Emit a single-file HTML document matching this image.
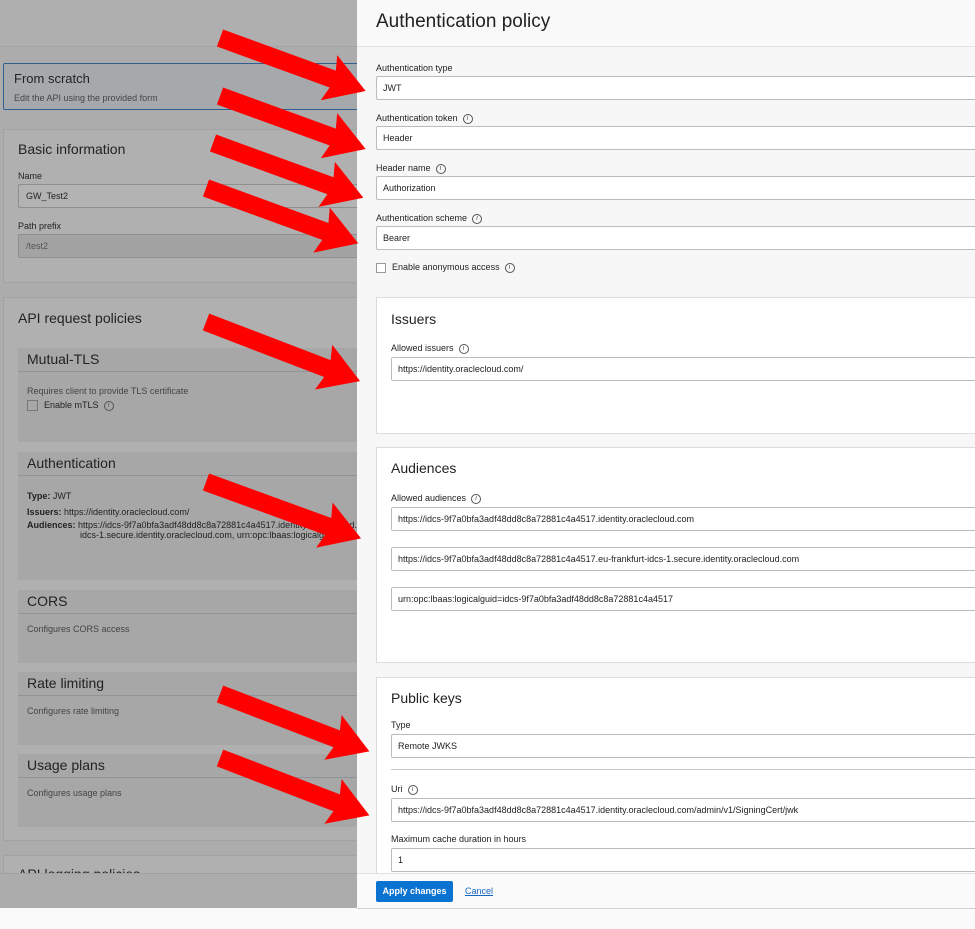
<!DOCTYPE html>
<html><head><meta charset="utf-8"><style>
*{margin:0;padding:0;box-sizing:border-box}
body{width:975px;height:929px;overflow:hidden;background:#fafafa;font-family:"Liberation Sans",Arial,sans-serif;position:relative}
.a{position:absolute}
#left{left:0;top:0;width:357px;height:908px;background:#acacac;overflow:hidden}
.card{position:absolute;left:3px;width:360px;background:#b0b0b0;border:1px solid #a2a2a2}
.sub{position:absolute;left:18px;width:345px;background:#a7a7a7}
.subh{height:24px;border-bottom:1px solid #8f9499;font-size:14px;color:#222;padding:3px 0 0 9px}
.t{font-size:10px;color:#444}
#right{left:357px;top:0;width:618px;height:908px;background:#f7f7f7}
.lbl{position:absolute;font-size:9px;color:#222}
.inp{position:absolute;left:19px;width:610px;height:24px;background:#fff;border:1px solid #b9bcc1;border-radius:2px;font-size:9px;color:#222;padding:6px 0 0 6px}
.sec{position:absolute;left:19px;width:610px;background:#fff;border:1px solid #dcdcdc}
.i{display:inline-block;width:10px;height:10px;border:1px solid #555;border-radius:50%;font-size:7px;line-height:8px;text-align:center;vertical-align:middle;margin-left:5px;color:#555;font-style:italic}
</style></head><body>
<div id="left" class="a">
 <div class="a" style="left:0;top:0;width:357px;height:47px;background:#afafaf;border-bottom:1px solid #a3a3a3"></div>
 <div class="a" style="left:3px;top:63px;width:360px;height:47px;background:#a6a9ac;border:1px solid #2f5f8f;border-radius:2px"></div>
 <div class="a" style="left:14px;top:71px;font-size:13px;color:#222">From scratch</div>
 <div class="a t" style="left:14px;top:93px;font-size:9px">Edit the API using the provided form</div>
 <div class="card" style="top:129px;height:154px"></div>
 <div class="a" style="left:18px;top:141px;font-size:14px;color:#222">Basic information</div>
 <div class="a" style="left:18px;top:171px;font-size:9px;color:#222">Name</div>
 <div class="a" style="left:18px;top:184px;width:345px;height:24px;background:#b3b3b3;border:1px solid #8f8f8f;border-radius:2px;font-size:9px;padding:6px 7px;color:#222">GW_Test2</div>
 <div class="a" style="left:18px;top:221px;font-size:9px;color:#222">Path prefix</div>
 <div class="a" style="left:18px;top:234px;width:345px;height:24px;background:#a3a3a3;border:1px solid #8f8f8f;border-radius:2px;font-size:9px;padding:6px 7px;color:#555">/test2</div>
 <div class="card" style="top:297px;height:544px"></div>
 <div class="a" style="left:18px;top:310px;font-size:14px;color:#222">API request policies</div>
 <div class="sub" style="top:348px;height:94px"><div class="subh">Mutual-TLS</div>
  <div class="t" style="margin:14px 0 0 9px;font-size:9px">Requires client to provide TLS certificate</div>
  <div style="margin:4px 0 0 9px;font-size:9px;color:#222"><span style="display:inline-block;width:11px;height:11px;border:1px solid #777;vertical-align:middle;margin-right:6px"></span>Enable mTLS<span class="i">i</span></div></div>
 <div class="sub" style="top:452px;height:128px"><div class="subh">Authentication</div>
  <div style="margin:12px 0 0 9px;font-size:9px;color:#222;line-height:16px"><b>Type:</b> JWT<br><b>Issuers:</b> https://identity.oraclecloud.com/</div>
  <div style="margin:0 0 0 9px;font-size:9px;color:#222;line-height:10px;white-space:nowrap"><b>Audiences:</b> https://idcs-9f7a0bfa3adf48dd8c8a72881c4a4517.identity.oraclecloud.com,<br><span style="padding-left:53px">idcs-1.secure.identity.oraclecloud.com, urn:opc:lbaas:logicalguid</span></div></div>
 <div class="sub" style="top:590px;height:73px"><div class="subh">CORS</div><div class="t" style="margin:10px 0 0 9px;font-size:9px">Configures CORS access</div></div>
 <div class="sub" style="top:672px;height:73px"><div class="subh">Rate limiting</div><div class="t" style="margin:10px 0 0 9px;font-size:9px">Configures rate limiting</div></div>
 <div class="sub" style="top:754px;height:73px"><div class="subh">Usage plans</div><div class="t" style="margin:10px 0 0 9px;font-size:9px">Configures usage plans</div></div>
 <div class="card" style="top:855px;height:80px"></div>
 <div class="a" style="left:18px;top:866px;font-size:14px;color:#222">API logging policies</div>
 <div class="a" style="left:0;top:873px;width:357px;height:35px;background:#acacac;border-top:1px solid #a0a0a0"></div>
</div>
<div id="right" class="a">
 <div class="a" style="left:0;top:0;width:618px;height:47px;border-bottom:1px solid #e2e2e2;background:#f9f9f9"></div>
 <div class="a" style="left:19px;top:11px;font-size:19px;color:#222">Authentication policy</div>
 <div class="lbl" style="left:19px;top:63px">Authentication type</div>
 <div class="inp" style="top:76px">JWT</div>
 <div class="lbl" style="left:19px;top:113px">Authentication token<span class="i">i</span></div>
 <div class="inp" style="top:126px">Header</div>
 <div class="lbl" style="left:19px;top:163px">Header name<span class="i">i</span></div>
 <div class="inp" style="top:176px">Authorization</div>
 <div class="lbl" style="left:19px;top:213px">Authentication scheme<span class="i">i</span></div>
 <div class="inp" style="top:226px">Bearer</div>
 <div class="lbl" style="left:19px;top:262px"><span style="display:inline-block;width:10px;height:10px;border:1px solid #999;background:#fff;vertical-align:middle;margin-right:6px"></span>Enable anonymous access<span class="i">i</span></div>
 <div class="sec" style="top:297px;height:137px"></div>
 <div class="a" style="left:34px;top:311px;font-size:14px;color:#222">Issuers</div>
 <div class="lbl" style="left:34px;top:343px">Allowed issuers<span class="i">i</span></div>
 <div class="inp" style="left:34px;top:357px">https://identity.oraclecloud.com/</div>
 <div class="sec" style="top:447px;height:216px"></div>
 <div class="a" style="left:34px;top:460px;font-size:14px;color:#222">Audiences</div>
 <div class="lbl" style="left:34px;top:493px">Allowed audiences<span class="i">i</span></div>
 <div class="inp" style="left:34px;top:507px">https://idcs-9f7a0bfa3adf48dd8c8a72881c4a4517.identity.oraclecloud.com</div>
 <div class="inp" style="left:34px;top:547px">https://idcs-9f7a0bfa3adf48dd8c8a72881c4a4517.eu-frankfurt-idcs-1.secure.identity.oraclecloud.com</div>
 <div class="inp" style="left:34px;top:587px">urn:opc:lbaas:logicalguid=idcs-9f7a0bfa3adf48dd8c8a72881c4a4517</div>
 <div class="sec" style="top:677px;height:200px"></div>
 <div class="a" style="left:34px;top:690px;font-size:14px;color:#222">Public keys</div>
 <div class="lbl" style="left:34px;top:720px">Type</div>
 <div class="inp" style="left:34px;top:734px">Remote JWKS</div>
 <div class="a" style="left:34px;top:769px;width:600px;border-top:1px solid #c6c6c6"></div>
 <div class="lbl" style="left:34px;top:784px">Uri<span class="i">i</span></div>
 <div class="inp" style="left:34px;top:798px">https://idcs-9f7a0bfa3adf48dd8c8a72881c4a4517.identity.oraclecloud.com/admin/v1/SigningCert/jwk</div>
 <div class="lbl" style="left:34px;top:834px">Maximum cache duration in hours</div>
 <div class="inp" style="left:34px;top:848px">1</div>
 <div class="a" style="left:0;top:873px;width:618px;height:36px;background:#fafafa;border-top:1px solid #e0e0e0;border-bottom:1px solid #d0d0d0"></div>
 <div class="a" style="left:19px;top:881px;width:77px;height:21px;background:#0a72d1;border-radius:2px;color:#fff;font-size:9px;font-weight:bold;text-align:center;padding-top:5px">Apply changes</div>
 <div class="a" style="left:108px;top:886px;font-size:9px;color:#1565c0;text-decoration:underline">Cancel</div>
</div>
<svg class="a" style="left:0;top:0" width="975" height="929">
 <g fill="#ff0000">
  <polygon transform="translate(220,38) rotate(20)" points="0,-9 120,-9 116,-24 155,0 116,24 120,9 0,9"/>
  <polygon transform="translate(220,96) rotate(20)" points="0,-9 120,-9 116,-24 155,0 116,24 120,9 0,9"/>
  <polygon transform="translate(213,143) rotate(20)" points="0,-9 125,-9 121,-24 160,0 121,24 125,9 0,9"/>
  <polygon transform="translate(206,188) rotate(20)" points="0,-9 127,-9 123,-24 162,0 123,24 127,9 0,9"/>
  <polygon transform="translate(206,322) rotate(21)" points="0,-9 130,-9 126,-24 165,0 126,24 130,9 0,9"/>
  <polygon transform="translate(206,482) rotate(20)" points="0,-9 130,-9 126,-24 165,0 126,24 130,9 0,9"/>
  <polygon transform="translate(220,694) rotate(21)" points="0,-9 125,-9 121,-24 160,0 121,24 125,9 0,9"/>
  <polygon transform="translate(220,758) rotate(21)" points="0,-9 125,-9 121,-24 160,0 121,24 125,9 0,9"/>
 </g>
</svg>
</body></html>
